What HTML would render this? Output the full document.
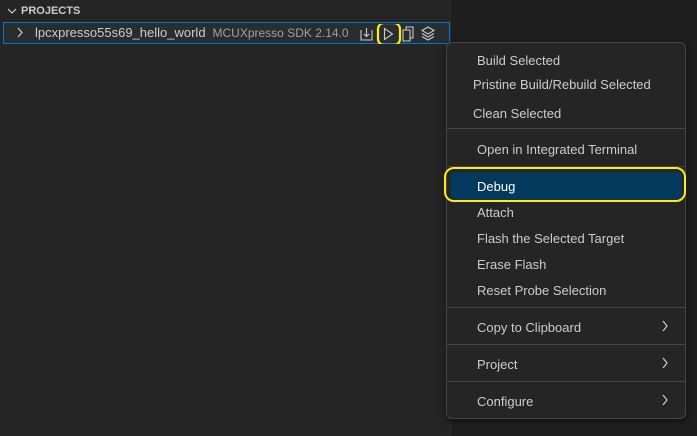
<!DOCTYPE html><html><head><style>
body{margin:0;width:697px;height:436px;background:#1f1f1f;font-family:"Liberation Sans",sans-serif;position:relative;overflow:hidden}
.side{position:absolute;left:0;top:0;width:450px;height:436px;background:#252526;border-right:1px solid #2b2b2b}
.t{position:absolute;white-space:nowrap;color:#cccccc;font-size:13px}
.menu{position:absolute;left:446px;top:42px;width:238px;height:375px;background:#252526;border:1px solid #454545;border-radius:6px;box-shadow:0 2px 8px #0008}
.sep{position:absolute;left:446px;width:240px;height:1px;background:#454545}
.mi{position:absolute;color:#cccccc;font-size:13px;white-space:nowrap}
.ch{position:absolute;left:661px}
</style></head><body>
<div class="side"></div>
<svg style="position:absolute;left:7px;top:7px" width="10" height="8" viewBox="0 0 10 8" fill="none" stroke="#ccc" stroke-width="1.2"><path d="M1 2l4 4 4-4"/></svg>
<div class="t" style="left:21px;top:5px;font-size:11px;font-weight:bold;color:#cccccc">PROJECTS</div>
<div style="position:absolute;left:3px;top:22px;width:445px;height:20px;border:1px solid #0078d4;background:#2a2d2e"></div>
<svg style="position:absolute;left:16px;top:27px" width="8" height="11" viewBox="0 0 8 11" fill="none" stroke="#ccc" stroke-width="1.2"><path d="M2 1l4 4.5L2 10"/></svg>
<div class="t" style="left:35px;top:25px">lpcxpresso55s69_hello_world <span style="font-size:12px;color:#a0a0a0">&nbsp;MCUXpresso SDK 2.14.0</span></div>
<svg style="position:absolute;left:358px;top:24px" width="92" height="20" viewBox="0 0 92 20" fill="none" stroke="#cccccc" stroke-width="1.1">
<path d="M3 6v10h11V6M8.5 4v8M6 10l2.5 2.5L11 10"/>
<rect x="20" y="-1" width="22" height="22" rx="6" stroke="#ffee00" stroke-width="2.2"/>
<path d="M26.5 4.5v11l8-5.5z"/>
<path d="M45 6h7v11h-7zM48 6V3h7v11h-3"/>
<path d="M70 3l-6 3.5 6 3.5 6-3.5zM64 9.5l6 3.5 6-3.5M64 12.5l6 3.5 6-3.5"/>
</svg>
<div class="menu"></div>
<div class="mi" style="left:477px;top:53px">Build Selected</div>
<div class="mi" style="left:473px;top:77px">Pristine Build/Rebuild Selected</div>
<div class="mi" style="left:473px;top:106px">Clean Selected</div>
<div class="sep" style="top:128px"></div>
<div class="mi" style="left:477px;top:142px">Open in Integrated Terminal</div>
<div class="sep" style="top:166px"></div>
<div style="position:absolute;left:451px;top:172px;width:231px;height:28px;background:#04395e;border-radius:3px"></div>
<div style="position:absolute;left:444px;top:167px;width:242px;height:35px;border:2.5px solid #ffee00;border-radius:10px;box-sizing:border-box"></div>
<div class="mi" style="left:477px;top:179px;color:#fff">Debug</div>
<div class="mi" style="left:477px;top:205px">Attach</div>
<div class="mi" style="left:477px;top:231px">Flash the Selected Target</div>
<div class="mi" style="left:477px;top:257px">Erase Flash</div>
<div class="mi" style="left:477px;top:283px">Reset Probe Selection</div>
<div class="sep" style="top:307px"></div>
<div class="mi" style="left:477px;top:320px">Copy to Clipboard</div>
<svg class="ch" style="top:320px" width="8" height="12" viewBox="0 0 8 12" fill="none" stroke="#ccc" stroke-width="1.2"><path d="M2 1l4 5-4 5"/></svg>
<div class="sep" style="top:344px"></div>
<div class="mi" style="left:477px;top:357px">Project</div>
<svg class="ch" style="top:357px" width="8" height="12" viewBox="0 0 8 12" fill="none" stroke="#ccc" stroke-width="1.2"><path d="M2 1l4 5-4 5"/></svg>
<div class="sep" style="top:381px"></div>
<div class="mi" style="left:477px;top:394px">Configure</div>
<svg class="ch" style="top:394px" width="8" height="12" viewBox="0 0 8 12" fill="none" stroke="#ccc" stroke-width="1.2"><path d="M2 1l4 5-4 5"/></svg>
</body></html>
